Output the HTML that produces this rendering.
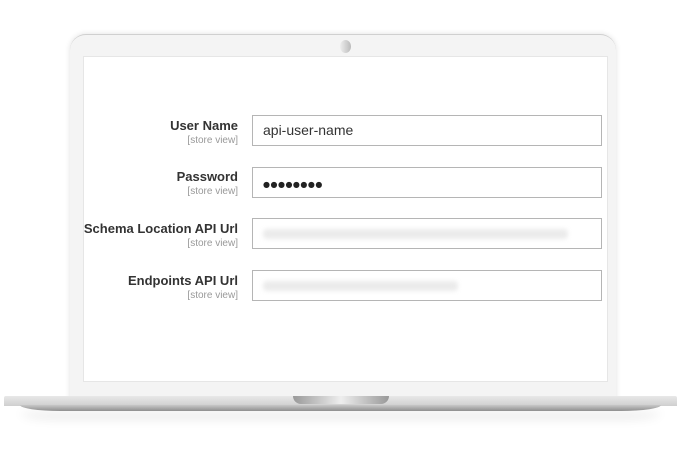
<!DOCTYPE html>
<html><head><style>
body{margin:0;width:680px;height:450px;background:#fff;position:relative;overflow:hidden;font-family:"Liberation Sans",sans-serif}
.lid{position:absolute;left:70px;top:34px;width:546px;height:372px;background:#f4f4f4;border-radius:16px 16px 0 0;border-top:1px solid #d0d0d0;box-shadow:0 0 6px rgba(0,0,0,.12)}
.screen{position:absolute;left:83px;top:56px;width:523px;height:324px;background:#fff;border:1px solid #e6e6e6}
.cam{position:absolute;left:340px;top:40px;width:11px;height:13px;border-radius:50%;background:linear-gradient(90deg,#eee,#bbb)}
.base{position:absolute;left:4px;top:396px;width:673px;height:10px;background:linear-gradient(#e8e8e8,#cfcfcf);border-radius:2px 2px 0 0}
.base2{position:absolute;left:20px;top:405px;width:641px;height:6px;background:linear-gradient(#c8c8c8,#8f8f8f);border-radius:0 0 40px 40px/0 0 6px 6px;box-shadow:0 8px 10px rgba(0,0,0,.1)}
.notch{position:absolute;left:293px;top:396px;width:96px;height:8px;background:linear-gradient(90deg,#999,#eee 50%,#999);border-radius:0 0 8px 8px}
.lbl{position:absolute;right:442px;text-align:right;color:#333;font-size:13px;font-weight:bold;white-space:nowrap}
.lbl small{display:block;font-weight:normal;font-size:10px;color:#999;margin-top:2px}
.in{position:absolute;left:252px;width:348px;height:29px;border:1px solid #b5b5b5;background:#fff;font-size:14px;color:#333;line-height:29px;box-sizing:content-box}
.in span{padding-left:10px}
.blur{position:absolute;left:10px;top:10px;height:10px;background:#ebebeb;filter:blur(2px);border-radius:4px}
</style></head><body>
<div class="lid"></div>
<div class="screen"></div>
<div class="cam"></div>
<div class="lbl" style="top:118px">User Name<small>[store view]</small></div>
<div class="in" style="top:115px"><span>api-user-name</span></div>
<div class="lbl" style="top:169px">Password<small>[store view]</small></div>
<div class="in" style="top:167px"><span style="font-family:'DejaVu Sans',sans-serif;font-size:8px;letter-spacing:0.5px;color:#222">●●●●●●●●</span></div>
<div class="lbl" style="top:221px">Schema Location API Url<small>[store view]</small></div>
<div class="in" style="top:218px"><div class="blur" style="width:305px"></div></div>
<div class="lbl" style="top:273px">Endpoints API Url<small>[store view]</small></div>
<div class="in" style="top:270px"><div class="blur" style="width:195px"></div></div>
<div class="base"></div>
<div class="base2"></div>
<div class="notch"></div>
</body></html>
